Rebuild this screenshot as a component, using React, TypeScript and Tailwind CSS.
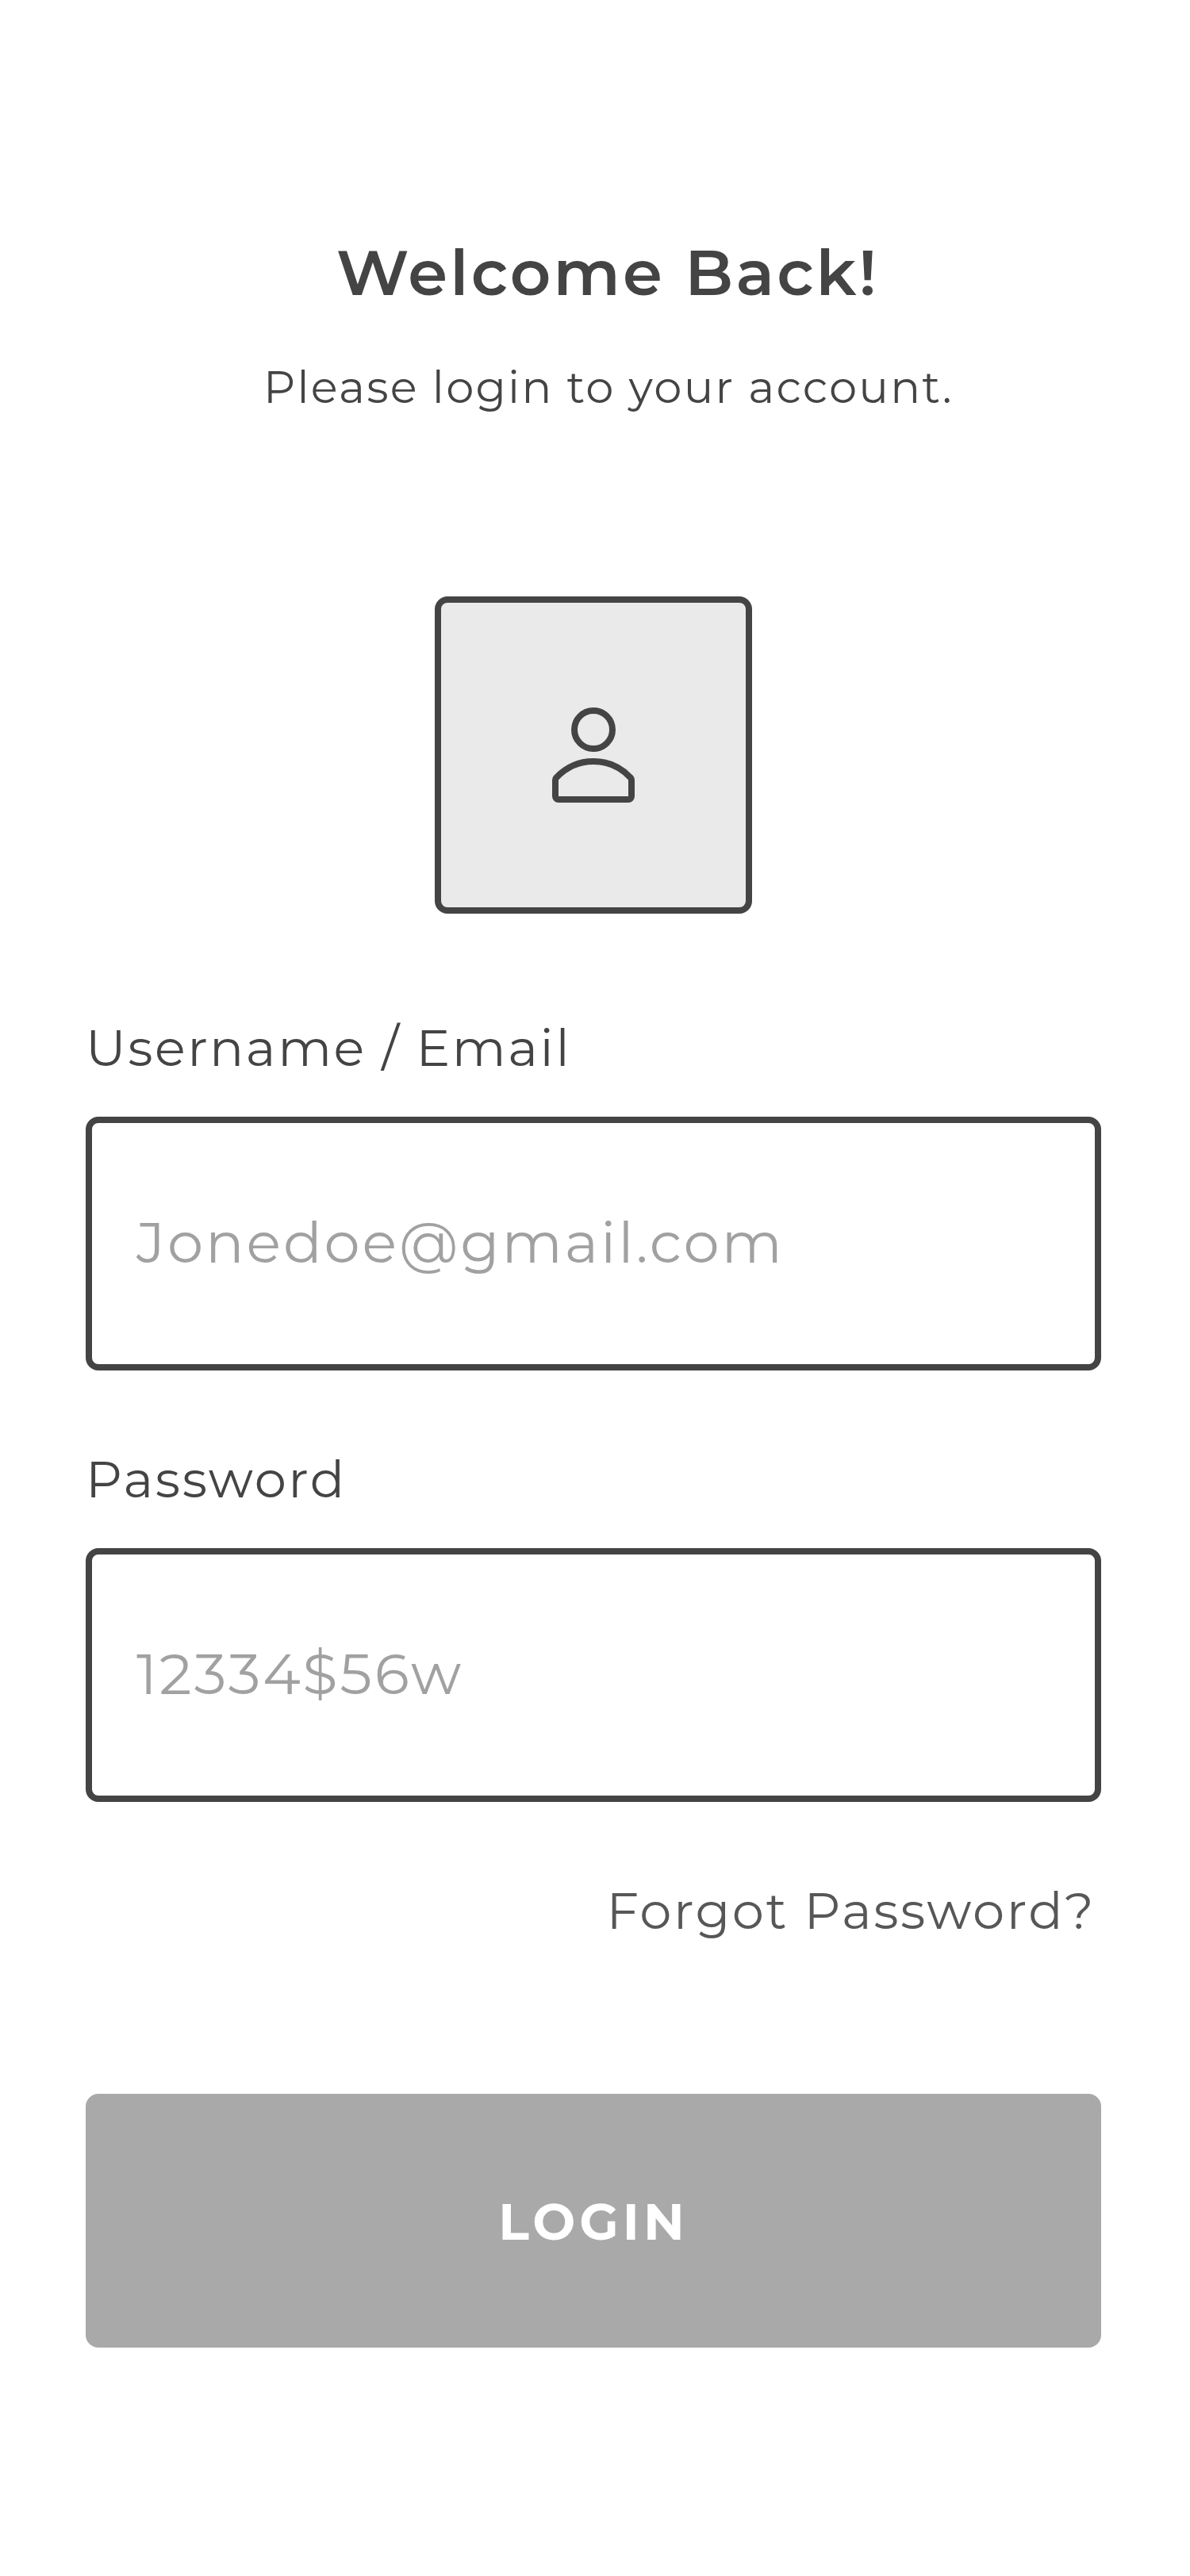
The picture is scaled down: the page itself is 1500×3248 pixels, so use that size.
import React from "react";

function UserIcon() {
  return (
    <svg
      className="h-[120px] w-[104px]"
      viewBox="0 0 104 120"
      fill="none"
      stroke="#444444"
      strokeWidth={8}
      aria-hidden="true"
    >
      <circle cx="52" cy="28" r="24" />
      <path d="M4 91.5C4 90.3 4.5 89.2 5.3 88.4C17.1 76 33.6 68 52 68C70.4 68 86.9 76 98.7 88.4C99.5 89.2 100 90.3 100 91.5V112C100 114.2 98.2 116 96 116H8C5.8 116 4 114.2 4 112Z" />
    </svg>
  );
}

function Field({ id, label, type, placeholder }: { id: string; label: string; type: string; placeholder: string }) {
  return (
    <div className="flex flex-col gap-12">
      <label htmlFor={id} className="text-[64px] leading-[78px] tracking-[0.04em]">
        {label}
      </label>
      <input
        id={id}
        type={type}
        placeholder={placeholder}
        className="h-[320px] w-full rounded-2xl border-8 border-[#444444] bg-white px-14 pb-1 text-[72px] leading-[88px] tracking-[0.04em] outline-none placeholder:text-[#a1a1a1] placeholder:opacity-100"
      />
    </div>
  );
}

export default function App() {
  return (
    <main className="h-[3248px] w-[1500px] bg-white pt-[295px] pl-[108px] font-['Montserrat','Inter',sans-serif] text-[#444444]">
      <div className="flex w-[1280px] flex-col">
        <header className="flex flex-col items-center gap-[62px] pl-[38px] whitespace-nowrap">
          <h1 className="pr-[2px] text-[80px] leading-[97px] font-semibold tracking-[0.04em]">Welcome Back!</h1>
          <p className="text-[56px] leading-[68px] tracking-[0.04em]">Please login to your account.</p>
        </header>

        <div className="mt-[230px] flex size-[400px] items-center justify-center self-center rounded-2xl border-8 border-[#444444] bg-[#eaeaea]">
          <UserIcon />
        </div>

        <form className="mt-[130px] flex flex-col gap-[98px]">
          <Field id="username" label="Username / Email" type="text" placeholder="Jonedoe@gmail.com" />
          <Field id="password" label="Password" type="password" placeholder="12334$56w" />
          <a href="#" className="self-end pr-[7px] text-[64px] leading-[78px] tracking-[0.04em] text-[#575757]">
            Forgot Password?
          </a>
          <button
            type="button"
            className="mt-[94px] flex h-[320px] items-center justify-center rounded-2xl bg-[#a9a9a9] pt-[2px] text-[64px] leading-[78px] font-bold tracking-[0.08em] text-white"
          >
            LOGIN
          </button>
        </form>
      </div>
    </main>
  );
}
